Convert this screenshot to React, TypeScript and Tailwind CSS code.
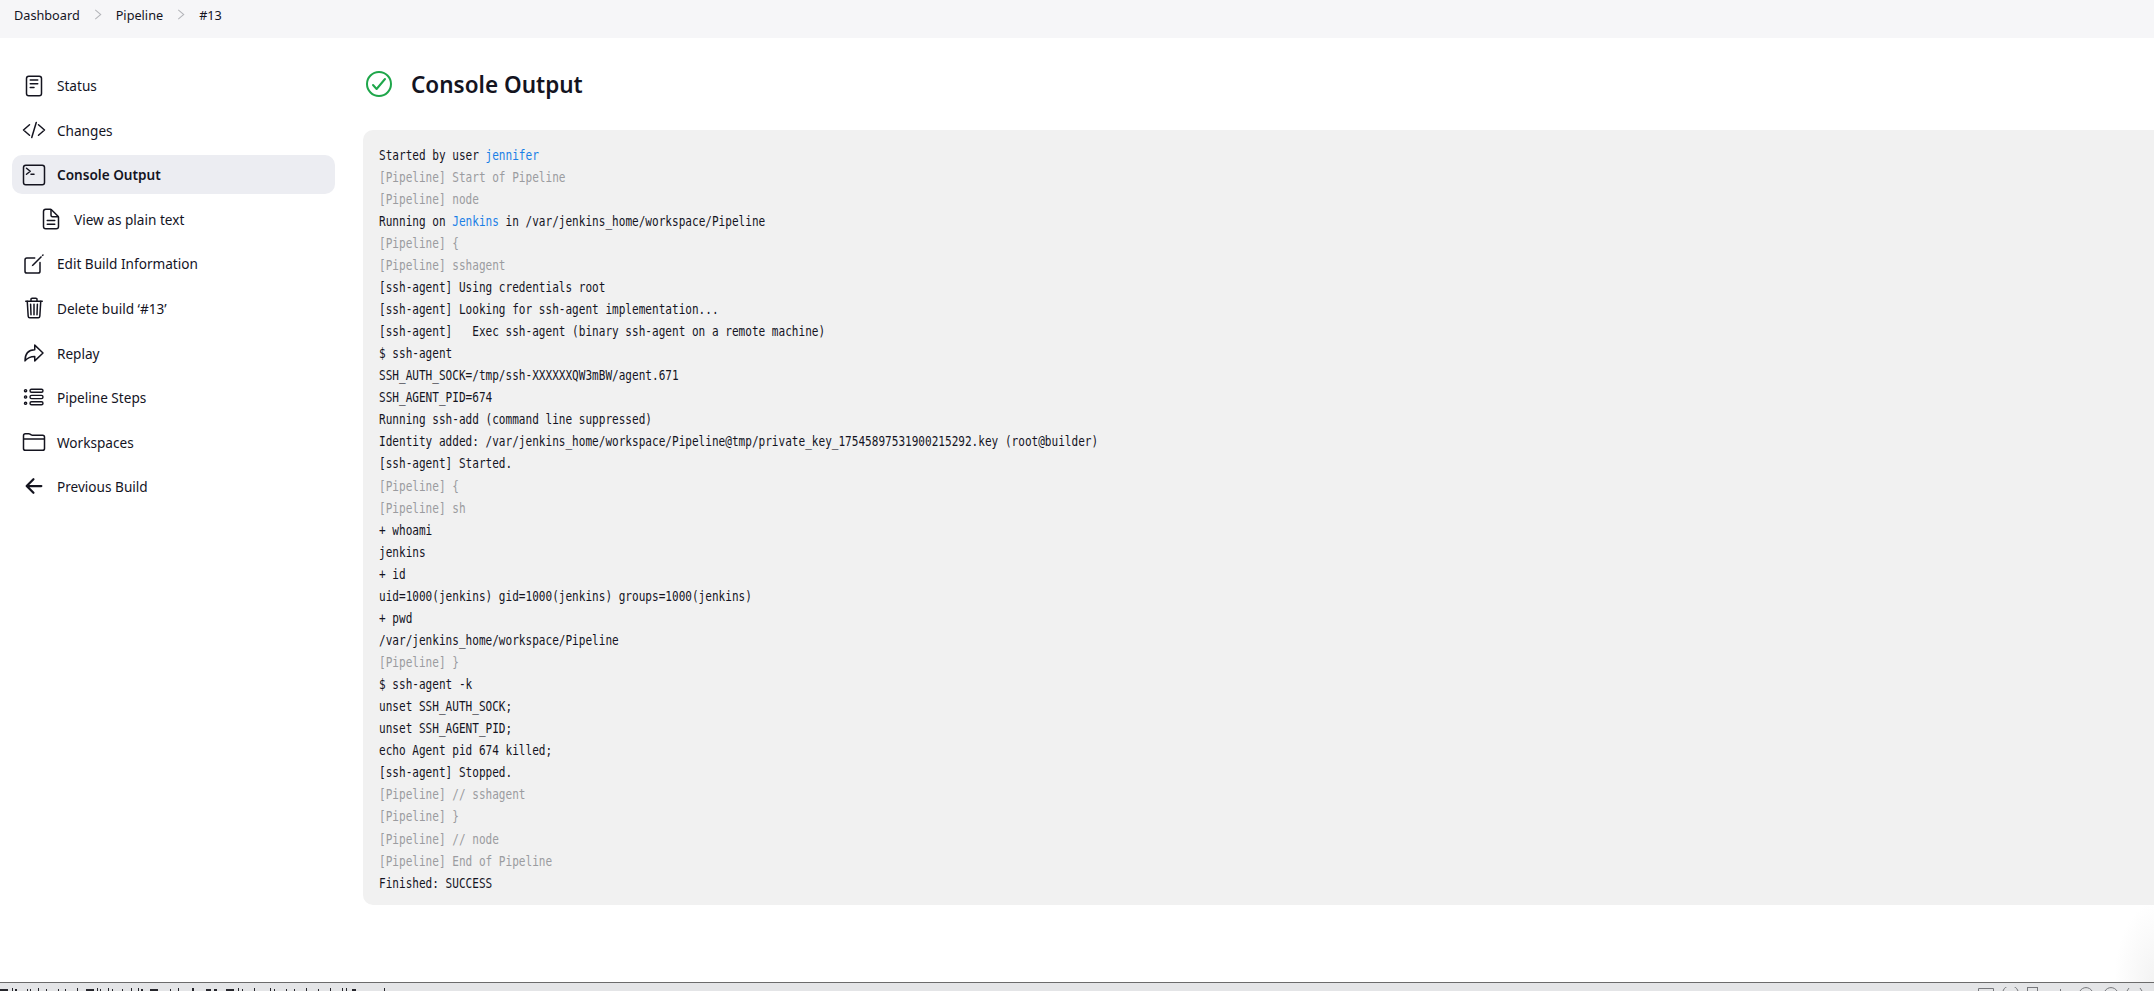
import { ReactNode } from "react";
import {
  IoArrowBackOutline,
  IoArrowRedoOutline,
  IoCheckmarkCircleOutline,
  IoCodeSlashOutline,
  IoCreateOutline,
  IoDocumentTextOutline,
  IoFolderOutline,
  IoReaderOutline,
  IoTerminalOutline,
  IoTrashOutline,
} from "react-icons/io5";

function StepsIcon() {
  return (
    <svg viewBox="0 0 24 24" className="h-6 w-6" fill="none" stroke="currentColor" strokeWidth="1.4">
      <rect x="8" y="4.2" width="13" height="3" rx="1.5" />
      <rect x="8" y="10.4" width="13" height="3.2" rx="1.6" />
      <rect x="8" y="16.8" width="13" height="3" rx="1.5" />
      <circle cx="3.6" cy="5.7" r="1.1" />
      <circle cx="3.6" cy="12" r="1.1" />
      <circle cx="3.6" cy="18.3" r="1.1" />
    </svg>
  );
}

function Chevron() {
  return (
    <svg viewBox="0 0 8 12" className="mt-[4px] h-[11px] w-[8px]" fill="none" stroke="#b4b5ba" strokeWidth="1.1">
      <path d="M1 1l6 5-6 5" />
    </svg>
  );
}

// the window's status bar is cut off by the screenshot, only the tops of its contents show
function StatusLeft() {
  const ticks = [
    [0, 8, 2], [12, 1, 3], [15, 2, 2], [27, 1, 2], [30, 1, 2], [38, 1, 3], [46, 1, 2], [58, 1, 2], [65, 1, 2], [77, 1, 3],
    [86, 8, 2], [97, 1, 3], [100, 1, 2], [108, 1, 3], [112, 1, 2], [122, 1, 2], [131, 1, 3], [138, 1, 3], [141, 2, 2], [150, 8, 2],
    [170, 1, 2], [178, 1, 3], [192, 2, 3], [206, 5, 2], [214, 3, 2], [226, 8, 2], [238, 1, 3], [242, 1, 2], [254, 1, 3], [270, 1, 3],
    [274, 1, 2], [286, 1, 2], [294, 1, 2], [306, 1, 3], [318, 1, 2], [330, 1, 3], [342, 1, 3], [346, 1, 3], [352, 4, 2], [384, 1, 3],
  ];
  return (
    <svg width="400" height="3" className="block" fill="#26262c">
      {ticks.map(([x, w, h]) => (
        <rect key={x} x={x} y={3 - h} width={w} height={h} />
      ))}
    </svg>
  );
}

function StatusRight() {
  return (
    <svg width="176" height="4" className="block" fill="none" stroke="#77787c">
      <path d="M0.5 4V1.5h15V4" />
      <path d="M25 4a8 8 0 0 1 15 0" />
      <rect x="49.5" y="0.5" width="10" height="6" />
      <path d="M82.5 2V4" />
      <path d="M102 4a7 7 0 0 1 12 0" />
      <path d="M127 4a7 7 0 0 1 12 0" />
      <path d="M149 4l2-3" />
      <path d="M162 1l2 3" />
    </svg>
  );
}

const items: { label: string; icon: ReactNode; active?: boolean; sub?: boolean }[] = [
  { label: "Status", icon: <IoReaderOutline className="h-6 w-6" /> },
  { label: "Changes", icon: <IoCodeSlashOutline className="h-6 w-6" /> },
  { label: "Console Output", icon: <IoTerminalOutline className="h-6 w-6" />, active: true },
  { label: "View as plain text", icon: <IoDocumentTextOutline className="h-6 w-6" />, sub: true },
  { label: "Edit Build Information", icon: <IoCreateOutline className="h-6 w-6" /> },
  { label: "Delete build ‘#13’", icon: <IoTrashOutline className="h-6 w-6" /> },
  { label: "Replay", icon: <IoArrowRedoOutline className="h-6 w-6" /> },
  { label: "Pipeline Steps", icon: <StepsIcon /> },
  { label: "Workspaces", icon: <IoFolderOutline className="h-6 w-6" /> },
  { label: "Previous Build", icon: <IoArrowBackOutline className="h-6 w-6" /> },
];

type Line = { text: ReactNode; muted?: boolean };

const link = "text-[#1a7fe6]";

const lines: Line[] = [
  { text: <>Started by user <span className={link}>jennifer</span></> },
  { text: "[Pipeline] Start of Pipeline", muted: true },
  { text: "[Pipeline] node", muted: true },
  { text: <>Running on <span className={link}>Jenkins</span> in /var/jenkins_home/workspace/Pipeline</> },
  { text: "[Pipeline] {", muted: true },
  { text: "[Pipeline] sshagent", muted: true },
  { text: "[ssh-agent] Using credentials root" },
  { text: "[ssh-agent] Looking for ssh-agent implementation..." },
  { text: "[ssh-agent]   Exec ssh-agent (binary ssh-agent on a remote machine)" },
  { text: "$ ssh-agent" },
  { text: "SSH_AUTH_SOCK=/tmp/ssh-XXXXXXQW3mBW/agent.671" },
  { text: "SSH_AGENT_PID=674" },
  { text: "Running ssh-add (command line suppressed)" },
  { text: "Identity added: /var/jenkins_home/workspace/Pipeline@tmp/private_key_17545897531900215292.key (root@builder)" },
  { text: "[ssh-agent] Started." },
  { text: "[Pipeline] {", muted: true },
  { text: "[Pipeline] sh", muted: true },
  { text: "+ whoami" },
  { text: "jenkins" },
  { text: "+ id" },
  { text: "uid=1000(jenkins) gid=1000(jenkins) groups=1000(jenkins)" },
  { text: "+ pwd" },
  { text: "/var/jenkins_home/workspace/Pipeline" },
  { text: "[Pipeline] }", muted: true },
  { text: "$ ssh-agent -k" },
  { text: "unset SSH_AUTH_SOCK;" },
  { text: "unset SSH_AGENT_PID;" },
  { text: "echo Agent pid 674 killed;" },
  { text: "[ssh-agent] Stopped." },
  { text: "[Pipeline] // sshagent", muted: true },
  { text: "[Pipeline] }", muted: true },
  { text: "[Pipeline] // node", muted: true },
  { text: "[Pipeline] End of Pipeline", muted: true },
  { text: "Finished: SUCCESS" },
];

export default function App() {
  return (
    <div className="relative flex h-[991px] w-[2154px] flex-col overflow-hidden bg-white font-['Noto_Sans',sans-serif] text-[#14141f]">
      <div className="flex h-[38px] shrink-0 items-start gap-[14px] bg-[#f6f6f8] pl-[14px] pt-[5px] text-[12.7px] leading-[20px]">
        <span>Dashboard</span>
        <Chevron />
        <span>Pipeline</span>
        <Chevron />
        <span>#13</span>
      </div>

      <div className="flex min-h-0 flex-1">
        <nav className="flex w-[335px] shrink-0 flex-col gap-[5.55px] pl-[12px] pt-[28px]">
          {items.map((item) => (
            <a
              key={item.label}
              className={`flex h-[39px] items-center gap-[11px] rounded-[10px] text-[13.6px] ${item.sub ? "pl-[27px]" : "pl-[10px]"} ${item.active ? "bg-[#ecedf2] font-semibold" : ""}`}
            >
              <span className="flex w-[24px] justify-center">{item.icon}</span>
              <span className="translate-y-[0.5px]">{item.label}</span>
            </a>
          ))}
        </nav>

        <main className="ml-[28px] min-w-0 flex-1 pt-[28px]">
          <div className="flex h-[36px] items-center gap-[16px]">
            <IoCheckmarkCircleOutline className="h-[32px] w-[32px] text-[#1ea64a]" />
            <h1 className="translate-y-[0.5px] text-[22.5px] font-semibold leading-[36px]">Console Output</h1>
          </div>
          <pre className="mt-[28px] w-[2000px] rounded-[10px] bg-[#f1f1f1] pb-[11px] pl-[16px] pt-[13.6px] font-['DejaVu_Sans_Mono',monospace] text-[14px] leading-[22.07px]">
            <div className="origin-left scale-x-[0.79]">
              {lines.map((line, i) => (
                <div key={i} className={line.muted ? "text-[#9b9ca0]" : ""}>
                  {line.text}
                </div>
              ))}
            </div>
          </pre>
        </main>
      </div>

      <div className="flex h-[9px] shrink-0 items-end justify-between overflow-hidden border-t border-[#6b6b6b] bg-[#e4e5e7]">
        <StatusLeft />
        <StatusRight />
      </div>

      <div className="pointer-events-none absolute bottom-[9px] right-0 h-[80px] w-[40px] bg-[radial-gradient(ellipse_at_bottom_right,#f3f3f3,transparent_70%)]" />
    </div>
  );
}
